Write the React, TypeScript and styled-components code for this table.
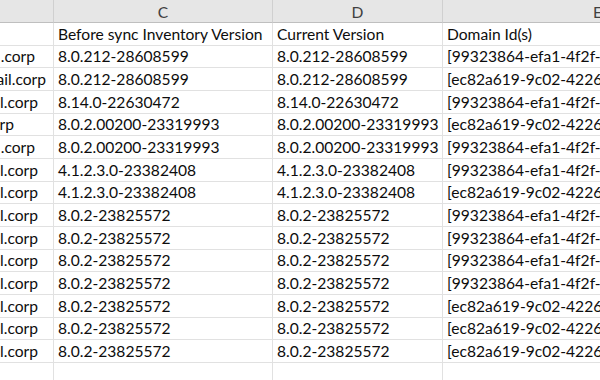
import React from 'react'
import styled, {createGlobalStyle} from 'styled-components'

const GlobalStyle = createGlobalStyle`
  html, body {
    margin: 0;
    padding: 0;
    background: #ffffff;
  }
`

type RowType = {
    host: string
    hostEnd: number
    before: string
    current: string
    domain: string
}

const ID_A = '[99323864-efa1-4f2f-a0c1-5d8e2b7a9f11]'
const ID_B = '[ec82a619-9c02-4226-b7d3-1f0a6c3e8d24]'

const rows: RowType[] = [
    {host: '.corp', hostEnd: 36, before: '8.0.212-28608599', current: '8.0.212-28608599', domain: ID_A},
    {host: 'nail.corp', hostEnd: 47, before: '8.0.212-28608599', current: '8.0.212-28608599', domain: ID_B},
    {host: 'il.corp', hostEnd: 39, before: '8.14.0-22630472', current: '8.14.0-22630472', domain: ID_A},
    {host: 'orp', hostEnd: 15, before: '8.0.2.00200-23319993', current: '8.0.2.00200-23319993', domain: ID_B},
    {host: '.corp', hostEnd: 36, before: '8.0.2.00200-23319993', current: '8.0.2.00200-23319993', domain: ID_A},
    {host: 'il.corp', hostEnd: 39, before: '4.1.2.3.0-23382408', current: '4.1.2.3.0-23382408', domain: ID_A},
    {host: 'il.corp', hostEnd: 39, before: '4.1.2.3.0-23382408', current: '4.1.2.3.0-23382408', domain: ID_B},
    {host: 'il.corp', hostEnd: 39, before: '8.0.2-23825572', current: '8.0.2-23825572', domain: ID_A},
    {host: 'il.corp', hostEnd: 39, before: '8.0.2-23825572', current: '8.0.2-23825572', domain: ID_A},
    {host: 'il.corp', hostEnd: 39, before: '8.0.2-23825572', current: '8.0.2-23825572', domain: ID_A},
    {host: 'il.corp', hostEnd: 39, before: '8.0.2-23825572', current: '8.0.2-23825572', domain: ID_A},
    {host: 'il.corp', hostEnd: 39, before: '8.0.2-23825572', current: '8.0.2-23825572', domain: ID_B},
    {host: 'il.corp', hostEnd: 39, before: '8.0.2-23825572', current: '8.0.2-23825572', domain: ID_B},
    {host: 'il.corp', hostEnd: 39, before: '8.0.2-23825572', current: '8.0.2-23825572', domain: ID_B},
]

const Sheet = styled.div`
  width: 600px;
  height: 380px;
  overflow: hidden;
  background: #ffffff;
  font-family: Lato, "Liberation Sans", sans-serif;
  font-size: 15.6px;
  color: #0d0d0d;
`

const Grid = styled.div`
  display: grid;
  grid-template-columns: 54px 219px 170px 310px;
  grid-auto-rows: 22.67px;
  grid-template-rows: 23px;
`

const HeadCell = styled.div<{ $last?: boolean }>`
  background: #e6e6e6;
  border-right: 1px solid ${p => p.$last ? 'transparent' : '#d0d0d0'};
  border-bottom: 1px solid #bfbfbf;
  display: flex;
  align-items: center;
  justify-content: center;
  color: #404040;
  box-sizing: border-box;
  padding-top: 1px;
`

const Cell = styled.div`
  border-right: 1px solid #e1e1e1;
  border-bottom: 1px solid #e1e1e1;
  box-sizing: border-box;
  display: flex;
  align-items: flex-end;
  padding: 0 4px 2px 4px;
  white-space: nowrap;
  overflow: hidden;
`

const HostCell = styled(Cell)<{ $end: number }>`
  justify-content: flex-end;
  padding-left: 0;
  padding-right: ${p => 54 - p.$end}px;
`

export default function App() {
    return (
        <Sheet>
            <GlobalStyle/>
            <Grid>
                <HeadCell/>
                <HeadCell>C</HeadCell>
                <HeadCell>D</HeadCell>
                <HeadCell $last>E</HeadCell>

                <Cell/>
                <Cell>Before sync Inventory Version</Cell>
                <Cell>Current Version</Cell>
                <Cell>Domain Id(s)</Cell>

                {rows.map((r, i) => (
                    <React.Fragment key={i}>
                        <HostCell $end={r.hostEnd}>{r.host}</HostCell>
                        <Cell>{r.before}</Cell>
                        <Cell>{r.current}</Cell>
                        <Cell>{r.domain}</Cell>
                    </React.Fragment>
                ))}

                <Cell/>
                <Cell/>
                <Cell/>
                <Cell/>
            </Grid>
        </Sheet>
    )
}
